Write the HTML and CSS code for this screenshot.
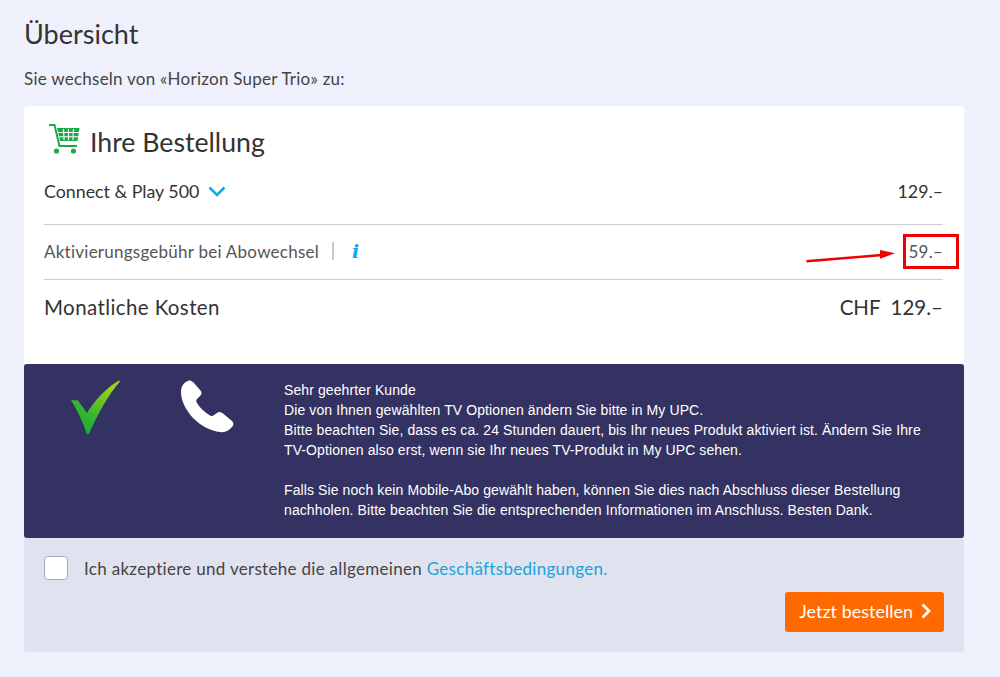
FILE: index.html
```html
<!DOCTYPE html>
<html lang="de">
<head>
    <meta charset="UTF-8">
    <title>Übersicht</title>
    <link rel="stylesheet" href="styles.css">
</head>
<body>
    <h1 class="page-title">Übersicht</h1>
    <p class="intro">Sie wechseln von «Horizon Super Trio» zu:</p>

    <div class="order-card">
        <div class="order-main">
            <div class="order-title">
                <svg class="cart-icon" width="34" height="32" viewBox="0 0 34 32">
                    <path d="M1 2h5.500l5 21H29" fill="none" stroke="#1fa84a" stroke-width="2"/>
                    <path d="M9 5H31.500L29.500 18H12z" fill="#1fa84a"/>
                    <path d="M10 9.500h21M11 13.800h20M15.500 6l.6 11M20.500 6v11M25.500 6l-.6 11" stroke="#fff" stroke-width="1.100" fill="none"/>
                    <circle cx="8.500" cy="28" r="2.600" fill="#1fa84a"/>
                    <circle cx="25.500" cy="28" r="2.600" fill="#1fa84a"/>
                </svg>
                <h2>Ihre Bestellung</h2>
            </div>

            <div class="row row-product">
                <span class="row-label">Connect &amp; Play 500
                    <svg class="chevron" width="18" height="11" viewBox="0 0 18 11"><path d="M1.500 1.500L9 9l7.500-7.500" fill="none" stroke="#0fa9e6" stroke-width="2.600"/></svg>
                </span>
                <span>129.–</span>
            </div>

            <div class="row row-fee">
                <span class="row-label">Aktivierungsgebühr bei Abowechsel<span class="sep"></span><span class="info">i</span></span>
                <span class="fee-price">59.–</span>
            </div>

            <div class="row row-total">
                <span class="total-label">Monatliche Kosten</span>
                <span>CHF&nbsp; 129.–</span>
            </div>

            <div class="red-box"></div>
            <svg class="red-arrow" width="92" height="20" viewBox="0 0 92 20">
                <path d="M0.500 16.200L76 10" stroke="#f00000" stroke-width="2.400" fill="none"/>
                <path d="M74 5L89 8.300L74 13.700z" fill="#f00000"/>
            </svg>
        </div>

        <div class="notice">
            <div class="notice-icons">
                <svg width="52" height="56" viewBox="0 0 52 56">
                    <defs>
                        <linearGradient id="checkGrad" x1="0" y1="1" x2="0.600" y2="0">
                            <stop offset="0" stop-color="#12a83a"/>
                            <stop offset="0.450" stop-color="#35b52e"/>
                            <stop offset="1" stop-color="#9bd41c"/>
                        </linearGradient>
                    </defs>
                    <path d="M1 20L8 20.500L17 33C24 21 36 8 49 0.500L50 1.500C38 15 28 34 19 53.500L17 54.500C13 42 7 30 1 20z" fill="url(#checkGrad)"/>
                </svg>
                <svg class="phone-icon" width="56" height="54" viewBox="0 0 56 54">
                    <path d="M9 1C11 0 13 1 15 3L21 10C23 12 23 14 21 16L18 19C17 20.500 17 21.500 18 23C21 28 26 32.500 31 35.500C33 36.500 34 36 35 35L38 33C40 31.500 42 32 44 33.500L53 41C55 43 55 45 53 47C50 50.500 46 53 41 52C32 51 22 46 14 38C7 30 2 21 2 12C2 7 4 3 9 1z" fill="#fff"/>
                </svg>
            </div>
            <div class="notice-text">
                Sehr geehrter Kunde<br>
                Die von Ihnen gewählten TV Optionen ändern Sie bitte in My UPC.<br>
                Bitte beachten Sie, dass es ca. 24 Stunden dauert, bis Ihr neues Produkt aktiviert ist. Ändern Sie Ihre TV-Optionen also erst, wenn sie Ihr neues TV-Produkt in My UPC sehen.<br>
                <br>
                Falls Sie noch kein Mobile-Abo gewählt haben, können Sie dies nach Abschluss dieser Bestellung nachholen. Bitte beachten Sie die entsprechenden Informationen im Anschluss. Besten Dank.
            </div>
        </div>

        <div class="order-footer">
            <div class="terms">
                <span class="checkbox"></span>
                <span>Ich akzeptiere und verstehe die allgemeinen <a href="#">Geschäftsbedingungen.</a></span>
            </div>
            <div class="actions">
                <button class="order-button">Jetzt bestellen
                    <svg width="10" height="16" viewBox="0 0 10 16"><path d="M1.500 1.500L8 8l-6.500 6.500" fill="none" stroke="#fff" stroke-width="2.800"/></svg>
                </button>
            </div>
        </div>
    </div>
</body>
</html>
```

FILE: styles.css
```css
body {
    margin: 0;
    padding: 16px 36px 25px 24px;
    background: #eef1fb;
    color: #333;
    font-family: "Lato", sans-serif;
}
.page-title {
    margin: 0;
    font-size: 27px;
    font-weight: 400;
    line-height: 36px;
}
.intro {
    margin: 14px 0 14px;
    font-size: 17px;
    line-height: 26px;
    letter-spacing: .25px;
    color: #444;
}
.order-card {
    border-radius: 4px;
    overflow: hidden;
    background: #e0e2ef;
}
.order-main {
    position: relative;
    height: 258px;
    padding: 0 21px 0 20px;
    background: #fff;
    box-sizing: border-box;
}
.order-title {
    display: flex;
    align-items: center;
    height: 58px;
    padding: 14px 0 0 4px;
    box-sizing: border-box;
}
.cart-icon {
    margin-right: 8px;
    margin-top: -6px;
}
.order-title h2 {
    margin: 0;
    font-size: 26.700px;
    font-weight: 400;
}
.row {
    display: flex;
    justify-content: space-between;
    align-items: center;
    font-size: 17.800px;
    box-sizing: border-box;
}
.row-label {
    display: flex;
    align-items: center;
}
.row-product {
    height: 61px;
    padding-bottom: 6px;
    border-bottom: 1px solid #ccc;
}
.chevron {
    margin-left: 9px;
}
.row-fee {
    height: 55px;
    padding-bottom: 2px;
    border-bottom: 1px solid #ccc;
    color: #555;
    font-size: 17px;
    letter-spacing: .25px;
}
.sep {
    width: 2px;
    height: 18px;
    margin: 0 18px 0 13px;
    background: #c8c8c8;
}
.info {
    color: #0fa9e6;
    font-family: "DejaVu Serif", serif;
    font-style: italic;
    font-weight: 700;
    font-size: 19px;
}
.row-total {
    height: 56px;
    padding-bottom: 2px;
    font-size: 20.500px;
}
.total-label {
    letter-spacing: .4px;
}
.red-box {
    position: absolute;
    left: 879px;
    top: 128px;
    width: 56px;
    height: 35px;
    box-sizing: border-box;
    border: 3px solid #f00000;
}
.red-arrow {
    position: absolute;
    left: 782px;
    top: 139px;
}
.notice {
    display: flex;
    height: 174px;
    background: #343263;
    border-radius: 3px;
    box-sizing: border-box;
    padding: 16px 36px 0 46px;
}
.notice-icons {
    display: flex;
    align-items: flex-start;
    width: 214px;
    flex-shrink: 0;
}
.phone-icon {
    margin-left: 57px;
}
.notice-text {
    color: #fff;
    font-family: "Liberation Sans", Arial, sans-serif;
    font-size: 14px;
    line-height: 20px;
    letter-spacing: .1px;
}
.order-footer {
    height: 114px;
    padding: 18px 20px 0;
    box-sizing: border-box;
}
.terms {
    display: flex;
    align-items: center;
    gap: 16px;
    font-size: 17px;
    letter-spacing: .3px;
    color: #444;
}
.terms a {
    color: #1aa3d9;
    text-decoration: none;
}
.checkbox {
    width: 24px;
    height: 24px;
    box-sizing: border-box;
    background: #fff;
    border: 1px solid #a3a5c4;
    border-radius: 4px;
}
.actions {
    display: flex;
    justify-content: flex-end;
    margin-top: 12px;
}
.order-button {
    display: flex;
    align-items: center;
    gap: 8px;
    height: 40px;
    padding: 0 13px 3px 14px;
    box-sizing: border-box;
    background: #ff6a00;
    color: #fff;
    border: none;
    border-radius: 3px;
    font-family: "Lato", sans-serif;
    font-size: 18px;
}
```
